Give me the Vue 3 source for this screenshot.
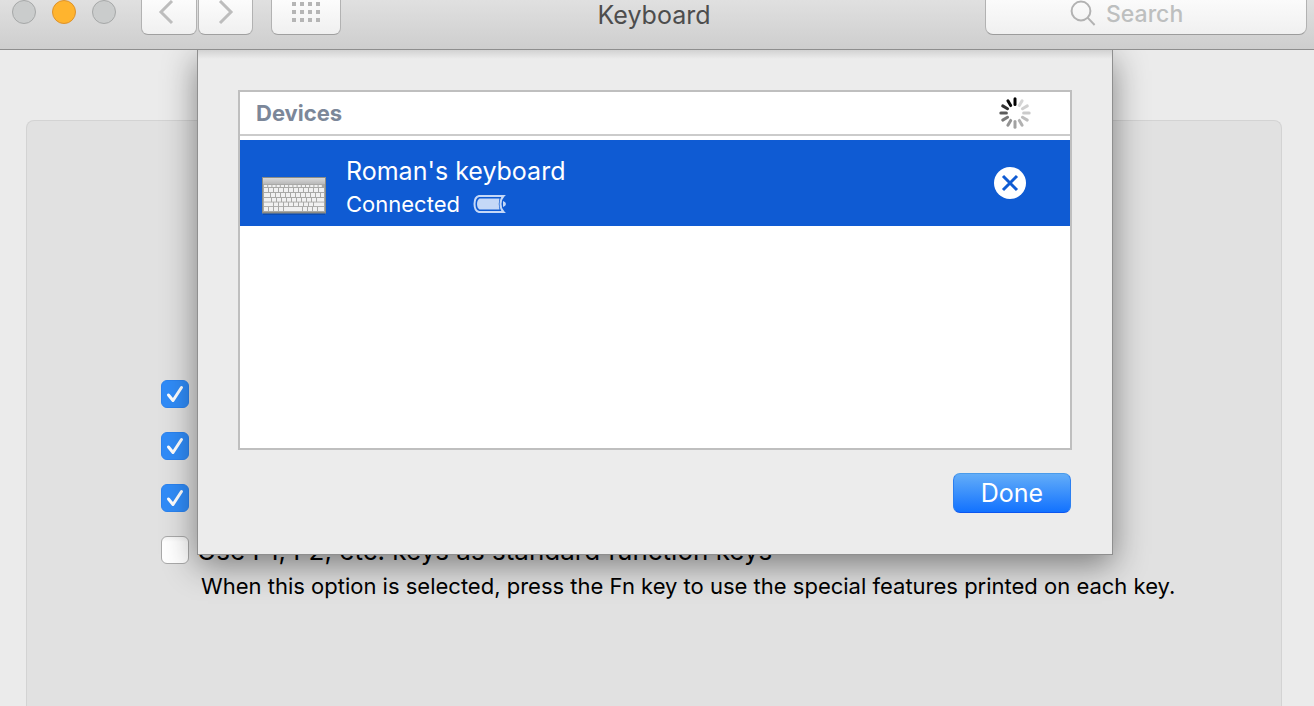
<script setup>
import { ref } from 'vue'

const query = ref('')
const options = ref([
  { id: 'opt-a', name: 'Option 1', label: '', checked: true },
  { id: 'opt-b', name: 'Option 2', label: '', checked: true },
  { id: 'opt-c', name: 'Option 3', label: '', checked: true },
  { id: 'opt-fn', name: null, label: 'Use F1, F2, etc. keys as standard function keys', checked: false },
])

// Spinner spokes, clockwise from the top.
const spokes = [1, 0.16, 0.18, 0.2, 0.25, 0.3, 0.36, 0.42, 0.52, 0.64, 0.8, 0.95].map((opacity, i) => ({
  opacity,
  turn: `rotate(${i * 30} 16 16)`,
}))

const dots = []
for (let r = 0; r < 3; r++) for (let c = 0; c < 4; c++) dots.push({ x: c * 8, y: r * 8 })

// Key caps of the keyboard icon: rows of [x, width].
const keys = []
const addRow = (y, h, widths) => {
  let x = 2
  for (const w of widths) {
    keys.push({ x, y, w, h })
    x += w + 1
  }
}
addRow(8, 2, [3.2, 3.2, 3.2, 3.2, 3.2, 3.2, 3.2, 3.2, 3.2, 3.2, 3.2, 3.2, 3.2, 3.2])
addRow(11, 4, [4, 4, 4, 4, 4, 4, 4, 4, 4, 4, 4, 5])
addRow(16, 4, [6, 4, 4, 4, 4, 4, 4, 4, 4, 4, 4, 3])
addRow(21, 3.6, [7, 4, 4, 4, 4, 4, 4, 4, 4, 4, 7])
addRow(25.5, 3.6, [9, 4, 4, 4, 4, 4, 4, 4, 4, 10])
addRow(30, 4, [4, 4, 4, 4, 18, 4, 4, 4, 6])
</script>

<template>
  <div class="window">
    <header class="toolbar">
      <div class="lights">
        <button class="light" aria-label="Close"></button>
        <button class="light amber" aria-label="Minimize"></button>
        <button class="light" aria-label="Zoom"></button>
      </div>
      <nav class="nav">
        <button class="tool back" aria-label="Back">
          <svg width="16" height="26" viewBox="0 0 16 26"><path d="M14 1 3 12 14 23" /></svg>
        </button>
        <button class="tool forward" aria-label="Forward">
          <svg width="16" height="26" viewBox="0 0 16 26"><path d="M2 1 13 12 2 23" /></svg>
        </button>
      </nav>
      <button class="tool grid" aria-label="Show All">
        <svg width="28" height="20" viewBox="0 0 28 20">
          <rect v-for="(d, i) in dots" :key="i" :x="d.x" :y="d.y" width="4" height="4" />
        </svg>
      </button>
      <h1 class="title">Keyboard</h1>
      <label class="search">
        <svg width="26" height="26" viewBox="0 0 26 26">
          <circle cx="11" cy="11" r="9.4" />
          <path d="M17.6 17.6 24.6 25" />
        </svg>
        <input v-model="query" type="text" placeholder="Search" aria-label="Search" />
      </label>
    </header>

    <main class="pane">
      <section class="group">
        <div v-for="o in options" :key="o.id" class="option">
          <input :id="o.id" v-model="o.checked" type="checkbox" :aria-label="o.name" />
          <svg class="tick" width="28" height="28" viewBox="0 0 28 28"><path d="M7.5 15 12 20.5 20.5 7.5" /></svg>
          <label :for="o.id">{{ o.label }}</label>
        </div>
        <p class="hint">When this option is selected, press the Fn key to use the special features printed on each key.</p>
      </section>

      <div class="sheet" role="dialog" aria-label="Devices">
        <div class="list">
          <div class="list-head">
            <h2>Devices</h2>
            <svg class="spinner" width="32" height="34" viewBox="0 0 32 32">
              <line v-for="(s, i) in spokes" :key="i" x1="16" y1="1.8" x2="16" y2="7.4" :opacity="s.opacity" :transform="s.turn" />
            </svg>
          </div>
          <div class="device">
            <svg class="keyboard" width="64" height="40" viewBox="0 0 64 40">
              <defs>
                <linearGradient id="kb-top" x1="0" y1="0" x2="0" y2="1">
                  <stop offset="0" stop-color="#d8d8d8" />
                  <stop offset="1" stop-color="#b9b9b9" />
                </linearGradient>
              </defs>
              <rect x="1" y="35" width="62" height="3" fill="#083a8c" opacity=".45" />
              <rect width="64" height="36.5" fill="#8d8d85" />
              <rect x="1" y="1" width="62" height="34" fill="#a9a9a7" />
              <rect x="1" y="1" width="62" height="6" fill="url(#kb-top)" />
              <rect v-for="(k, i) in keys" :key="i" :x="k.x" :y="k.y" :width="k.w" :height="k.h" fill="#f1f1f1" />
            </svg>
            <div class="info">
              <div class="name">Roman's keyboard</div>
              <div class="status">
                <span>Connected</span>
                <svg width="34" height="20" viewBox="0 0 34 20">
                  <path class="case" d="M30.500 2H6Q1.500 3 1.500 10T6 18H30.500Q27.500 15 27.500 10T30.500 2Z" />
                  <path class="charge" d="M6.500 4.500H26.500Q25 10 26.500 15.500H6.500Q4 14 4 10T6.500 4.500Z" />
                  <path class="charge" d="M30 7Q33 8 33 10T30 13Z" />
                </svg>
              </div>
            </div>
            <button class="remove" aria-label="Remove device">
              <svg width="32" height="32" viewBox="0 0 32 32">
                <circle cx="16" cy="16" r="16" />
                <path d="M9 9 23 23M23 9 9 23" />
              </svg>
            </button>
          </div>
        </div>
        <div class="actions">
          <button class="done">Done</button>
        </div>
      </div>
    </main>
  </div>
</template>

<style>
body {
  margin: 0;
}
</style>

<style scoped>
* {
  box-sizing: border-box;
}
.window {
  display: flex;
  flex-direction: column;
  height: 100vh;
  overflow: hidden;
  background: #ebebeb;
  font-family: Inter, "Liberation Sans", sans-serif;
  color: #000;
}
button,
input {
  font: inherit;
  margin: 0;
  padding: 0;
}
svg {
  display: block;
}
.toolbar {
  position: relative;
  z-index: 2;
  display: flex;
  align-items: flex-start;
  flex: none;
  height: 50px;
  padding: 0 7px 0 12px;
  background: linear-gradient(#e0e0e0, #cecece);
  border-bottom: 1px solid #8e8e8e;
}
.lights {
  display: flex;
  gap: 16px;
}
.light {
  width: 24px;
  height: 24px;
  border: 1px solid #a6a8a8;
  border-radius: 50%;
  background: #cacccc;
}
.light.amber {
  border-color: #dd922c;
  background: #ffb42e;
}
.nav {
  display: flex;
  gap: 1px;
  margin: 0 18px 0 25px;
}
.tool {
  display: flex;
  justify-content: center;
  height: 35px;
  border: 1px solid #b2b2b2;
  border-top: 0;
  border-bottom-color: #a0a0a0;
  border-radius: 0 0 7px 7px;
  background: linear-gradient(#fcfcfc, #f0f0f0);
}
.tool path {
  fill: none;
  stroke: #bdbdbd;
  stroke-width: 3;
}
.tool rect {
  fill: #b5b5b5;
}
.back {
  width: 56px;
  padding-right: 6px;
}
.forward {
  width: 55px;
}
.grid {
  width: 70px;
  padding-top: 2px;
}
.title {
  flex: 1;
  margin: 0;
  padding-right: 18px;
  text-align: center;
  font-size: 25px;
  line-height: 30px;
  font-weight: 400;
  color: #4d4d4d;
}
.search {
  display: flex;
  align-items: flex-start;
  gap: 10px;
  width: 322px;
  height: 35px;
  padding-left: 84px;
  border: 1px solid #b2b2b2;
  border-top: 0;
  border-bottom-color: #9c9c9c;
  border-radius: 0 0 8px 8px;
  background: linear-gradient(#fbfbfb, #f0f0f0);
}
.search svg {
  flex: none;
  fill: none;
  stroke: #b2b2b2;
  stroke-width: 2;
}
.search input {
  flex: 1;
  min-width: 0;
  height: 28px;
  border: 0;
  outline: 0;
  background: none;
  font-size: 23px;
  font-weight: 500;
}
.search input::placeholder {
  color: #bdbfbf;
  opacity: 1;
}
.pane {
  position: relative;
  display: flex;
  flex: 1;
  min-height: 0;
  overflow: hidden;
  padding: 70px 32px 0 26px;
}
.group {
  flex: 1;
  padding: 259px 0 0 134px;
  border: 1px solid #d3d3d3;
  border-bottom: 0;
  border-radius: 8px 8px 0 0;
  background: #e1e1e1;
}
.option {
  position: relative;
  display: flex;
  align-items: center;
  gap: 8px;
  height: 28px;
  margin-bottom: 24px;
  font-size: 26px;
  white-space: nowrap;
}
.option input {
  appearance: none;
  flex: none;
  width: 28px;
  height: 28px;
  border: 1px solid #a9a9a9;
  border-radius: 6px;
  background: linear-gradient(#f4f4f4, #fff 5px);
}
.option input:checked {
  border-color: #2b83ef;
  background: #308cf8;
}
.tick {
  display: none;
  position: absolute;
  left: 0;
  top: 0;
  pointer-events: none;
  fill: none;
  stroke: #fff;
  stroke-width: 3;
  stroke-linecap: round;
  stroke-linejoin: round;
}
.option input:checked + .tick {
  display: block;
}
.hint {
  margin: -16px 0 0;
  padding-left: 40px;
  font-size: 22px;
  line-height: 28px;
  white-space: nowrap;
}
.sheet {
  position: absolute;
  top: 0;
  left: 197px;
  right: 201px;
  padding: 40px;
  border: 1px solid #8f8f8f;
  border-top: 0;
  background: linear-gradient(#d2d2d2, #ececec 9px);
  box-shadow: 0 10px 32px rgba(0, 0, 0, 0.45);
}
.list {
  height: 360px;
  border: 2px solid #bfbfbf;
  background: #fff;
}
.list-head {
  display: flex;
  align-items: center;
  justify-content: space-between;
  height: 44px;
  margin-bottom: 4px;
  padding: 0 39px 0 16px;
  border-bottom: 2px solid #cbcbcb;
}
.list-head h2 {
  margin: 0;
  font-size: 22px;
  line-height: 28px;
  font-weight: 700;
  color: #7c8799;
}
.spinner {
  stroke: #000;
  stroke-width: 3;
  stroke-linecap: round;
}
.device {
  display: flex;
  align-items: center;
  height: 86px;
  padding: 0 44px 0 22px;
  background: #0f5bd3;
  color: #fff;
}
.keyboard {
  flex: none;
  margin-top: 28px;
}
.info {
  flex: 1;
  margin-left: 20px;
  padding-top: 8px;
}
.name {
  font-size: 25px;
  line-height: 34px;
}
.status {
  display: flex;
  align-items: center;
  gap: 13px;
  font-size: 22px;
  line-height: 32px;
}
.case {
  fill: none;
  stroke: #c5d8f7;
  stroke-width: 2;
}
.charge {
  fill: #c5d8f7;
}
.remove {
  border: 0;
  border-radius: 50%;
  background: none;
}
.remove circle {
  fill: #fff;
}
.remove path {
  stroke: #0f5bd3;
  stroke-width: 3;
}
.actions {
  display: flex;
  justify-content: flex-end;
  padding: 23px 1px 1px 0;
}
.done {
  width: 118px;
  height: 40px;
  border: 1px solid #2b7ff0;
  border-top-color: #4a9bea;
  border-bottom-color: #0c56ef;
  border-radius: 7px;
  background: linear-gradient(#63adf8, #1272ff);
  color: #fff;
  font-size: 25px;
}
</style>
